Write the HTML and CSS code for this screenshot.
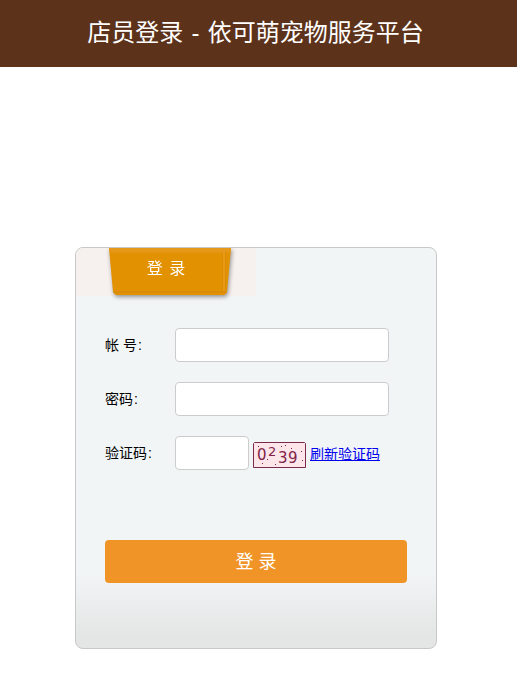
FILE: index.html
```html
<!DOCTYPE html>
<html lang="zh-CN">
<head>
  <meta charset="UTF-8">
  <title>店员登录 - 依可萌宠物服务平台</title>
  <link rel="stylesheet" href="styles.css">
</head>
<body>

<div class="header">店员登录 - 依可萌宠物服务平台</div>

<div class="login-box">
  <div class="tab-strip">
    <div class="tab"><span class="tab-text">登 录</span></div>
  </div>

  <form class="login-form">
    <div class="row">
      <label for="account">帐 号<span class="colon">:</span></label>
      <input type="text" id="account">
    </div>
    <div class="row">
      <label for="password">密码<span class="colon">:</span></label>
      <input type="password" id="password">
    </div>
    <div class="row">
      <label for="code">验证码<span class="colon">:</span></label>
      <input type="text" id="code" class="code-input">
      <svg class="captcha" width="53" height="26" viewBox="0 0 53 26">
        <path d="M1.5 0.5H51.5L52.5 1.5V25.5H0.5V1.5Z" fill="#fde6ea" stroke="#7b2a4a"/>
        <g font-family="'DejaVu Sans', sans-serif" fill="#7f2347">
          <text x="4" y="18" font-size="15">0</text>
          <text x="15" y="14" font-size="13">2</text>
          <text x="25" y="21" font-size="15">3</text>
          <text x="35" y="21" font-size="15">9</text>
        </g>
        <g fill="#86234a">
          <rect x="5" y="4" width="1" height="1"/>
          <rect x="9" y="21" width="1" height="1"/>
          <rect x="28" y="4" width="1" height="1"/>
          <rect x="32" y="3" width="1" height="1"/>
          <rect x="38" y="6" width="1" height="1"/>
          <rect x="48" y="9" width="1" height="1"/>
          <rect x="49" y="18" width="1" height="1"/>
          <rect x="22" y="22" width="1" height="1"/>
          <rect x="14" y="17" width="1" height="1"/>
        </g>
      </svg>
      <a href="#" class="refresh">刷新验证码</a>
    </div>
    <button type="button" class="submit">登 录</button>
  </form>
</div>

</body>
</html>
```

FILE: styles.css
```css
body {
  margin: 0;
  background: #fff;
  font-family: "Liberation Sans", "Noto Sans CJK SC", sans-serif;
  font-size: 14px;
  color: #000;
}

.header {
  height: 67px;
  line-height: 65px;
  background: #5c321b;
  color: #fff;
  font-size: 24px;
  word-spacing: 1.5px;
  text-align: center;
  padding-right: 6px;
}

.login-box {
  box-sizing: border-box;
  width: 362px;
  height: 402px;
  margin: 180px 0 0 75px;
  border: 1px solid #c8c8c8;
  border-radius: 8px;
  background: linear-gradient(to bottom, #f2f5f6 0, #f2f5f6 325px, #e4e5e5 390px);
  overflow: hidden;
}

.tab-strip {
  width: 180px;
  height: 48px;
  padding-left: 33px;
  box-sizing: border-box;
  background: #f6f1ee;
}

.tab {
  position: relative;
  width: 122px;
  height: 47px;
  line-height: 41px;
  padding-right: 8px;
  box-sizing: border-box;
  filter: drop-shadow(1px 2px 2px rgba(0, 0, 0, 0.4));
  color: #fff;
  font-size: 16px;
  word-spacing: 2px;
  text-align: center;
}

.tab::before {
  content: "";
  position: absolute;
  inset: 0;
  clip-path: polygon(0 0, 122px 0, 118px 44px, 115px 47px, 7px 47px, 4px 44px);
  background:
    linear-gradient(to bottom, #e6981a 0, #e6981a 3px, transparent 6px),
    linear-gradient(to top, #e29100 0, #e29100 2px, #da8b08 2px, #da8b08 4px, transparent 4px),
    linear-gradient(to left, transparent 5px, #da8b08 5px, #da8b08 6px, #e89a12 6px, #e89a12 8px, #da8b08 8px, #da8b08 9px, transparent 9px),
    #e29100;
}

.tab-text {
  position: relative;
}

.login-form {
  padding: 32px 29px 0;
}

.row {
  display: flex;
  align-items: center;
  height: 34px;
  margin-bottom: 20px;
}

.row label {
  width: 70px;
  padding-bottom: 2px;
}

.colon {
  margin-left: 1px;
}

.row input {
  box-sizing: border-box;
  width: 214px;
  height: 34px;
  padding: 0 6px;
  border: 1px solid #ccc;
  border-radius: 4px;
  background: #fff;
}

.row .code-input {
  width: 74px;
}

.captcha {
  margin: 4px 4px 0 4px;
}

.refresh {
  color: #00e;
  font-size: 14px;
}

.submit {
  display: block;
  width: 302px;
  height: 43px;
  margin-top: 70px;
  padding-bottom: 5px;
  border: none;
  border-radius: 4px;
  background: #f09428;
  color: #fff;
  font-family: inherit;
  font-size: 18px;
}
```
